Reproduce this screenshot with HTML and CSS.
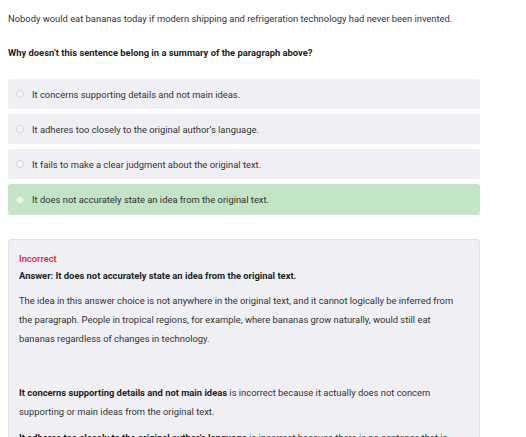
FILE: index.html
```html
<!DOCTYPE html>
<html>
<head>
<meta charset="utf-8">
<link rel="stylesheet" href="styles.css">
</head>
<body>
<div class="page">
  <p class="stem">Nobody would eat bananas today if modern shipping and refrigeration technology had never been invented.</p>
  <p class="question">Why doesn’t this sentence belong in a summary of the paragraph above?</p>
  <div class="options">
    <div class="option"><span class="radio"></span><span>It concerns supporting details and not main ideas.</span></div>
    <div class="option"><span class="radio"></span><span>It adheres too closely to the original author’s language.</span></div>
    <div class="option"><span class="radio"></span><span>It fails to make a clear judgment about the original text.</span></div>
    <div class="option correct"><span class="radio"></span><span>It does not accurately state an idea from the original text.</span></div>
  </div>
  <div class="feedback">
    <div class="verdict">Incorrect</div>
    <div class="answer">Answer: It does not accurately state an idea from the original text.</div>
    <p class="explain">The idea in this answer choice is not anywhere in the original text, and it cannot logically be inferred from the paragraph. People in tropical regions, for example, where bananas grow naturally, would still eat bananas regardless of changes in technology.</p>
    <p class="explain gap"><b>It concerns supporting details and not main ideas</b> is incorrect because it actually does not concern supporting or main ideas from the original text.</p>
    <p class="explain"><b>It adheres too closely to the original author’s language</b> is incorrect because there is no sentence that is similar to the author’s language in the original text.</p>
  </div>
</div>
</body>
</html>
```
FILE: styles.css
```css
html, body {
  margin: 0;
  padding: 0;
  background: #ffffff;
}
body {
  font-family: Roboto, "Liberation Sans", Arial, sans-serif;
  color: #333333;
  font-size: 9.4px;
}
.page {
  width: 472px;
  padding: 10px 8px 0 8px;
}
.stem {
  margin: 0;
  line-height: 18px;
}
.question {
  margin: 16px 0 0 0;
  line-height: 18px;
  font-weight: 700;
  color: #1e1e1e;
}
.options {
  margin-top: 17px;
  display: flex;
  flex-direction: column;
  gap: 5px;
}
.option {
  display: flex;
  align-items: center;
  height: 30px;
  background: #efeff4;
  border-radius: 3px;
  padding-left: 8px;
}
.option.correct {
  background: #c3e4c5;
  height: 31px;
}
.radio {
  width: 6px;
  height: 6px;
  border: 1px solid #d4d4da;
  border-radius: 50%;
  background: #f6f6f8;
  margin-right: 8px;
  flex: none;
}
.option.correct .radio {
  background: #eaf5ea;
  border-color: #d8ecd8;
}
.feedback {
  margin-top: 24px;
  background: #efeff4;
  border: 1px solid #e2e2e8;
  border-radius: 3px;
  padding: 11px 22px 10px 10px;
  height: 300px;
}
.verdict {
  color: #d6243c;
  font-weight: 500;
  line-height: 16px;
}
.answer {
  font-weight: 700;
  color: #1e1e1e;
  line-height: 16px;
  margin-top: 1px;
}
.explain {
  margin: 7px 0 0 0;
  line-height: 19px;
}
.explain.gap {
  margin-top: 35px;
}
.explain b {
  color: #1e1e1e;
}
```
